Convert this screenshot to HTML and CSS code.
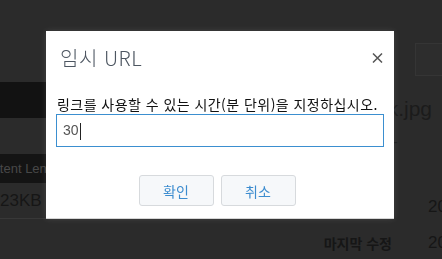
FILE: index.html
```html
<!DOCTYPE html>
<html lang="ko">
<head>
    <meta charset="UTF-8">
    <meta name="viewport" content="width=device-width, initial-scale=1.0">
    <title>임시 URL</title>
    <link rel="stylesheet" href="styles.css">
</head>
<body>
    <div class="page">
        <aside class="side">
            <div class="side-bar"></div>
            <div class="side-head">Content Length</div>
            <div class="side-cell">23KB</div>
        </aside>
        <main class="detail">
            <div class="search"></div>
            <h2 class="file-name">desk.jpg</h2>
            <div class="file-sub">-</div>
            <div class="meta">
                <div class="meta-label">생성</div>
                <div class="meta-value">2019-05-21</div>
                <div class="meta-label">마지막 수정</div>
                <div class="meta-value">2019-05-21</div>
            </div>
        </main>
    </div>

    <div class="modal">
        <div class="modal-header">
            <h3 class="modal-title">임시 URL</h3>
            <button class="close" type="button">
                <svg width="11" height="10" viewBox="0 0 11 10"><path d="M1 0.5L10 9.5M10 0.5L1 9.5" stroke="#555" stroke-width="1.5" fill="none"/></svg>
            </button>
        </div>
        <div class="modal-body">
            <label for="minutes">링크를 사용할 수 있는 시간(분 단위)을 지정하십시오.</label>
            <div class="field" id="minutes">30<span class="caret"></span></div>
        </div>
        <div class="modal-footer">
            <button class="btn" type="button">확인</button>
            <button class="btn" type="button">취소</button>
        </div>
    </div>
</body>
</html>
```

FILE: styles.css
```css
body {
    margin: 0;
    height: 259px;
    overflow: hidden;
    background: #2b2b2b;
    font-family: "Liberation Sans", "Noto Sans CJK KR", sans-serif;
}
.page {
    display: flex;
    margin-left: -26px;
}
.side {
    flex: 0 0 326px;
    padding-top: 82px;
}
.side-bar {
    height: 36px;
    background: #121212;
    margin-bottom: 36px;
}
.side-head {
    height: 29px;
    line-height: 29px;
    padding-left: 2px;
    background: #141414;
    color: #484848;
    font-size: 13px;
    white-space: nowrap;
}
.side-cell {
    height: 35px;
    line-height: 35px;
    padding-left: 26px;
    font-size: 17px;
    color: #161616;
    border-bottom: 1px solid #383838;
}
.detail {
    flex: 0 0 auto;
    padding-top: 43px;
}
.search {
    margin-left: 115px;
    width: 60px;
    height: 31px;
    border: 1px solid #353535;
    background: #2d2d2d;
}
.file-name {
    width: 132px;
    margin: 21px 0 0;
    text-align: right;
    font-size: 21px;
    font-weight: normal;
    line-height: 24px;
    color: #1b1b1b;
}
.file-sub {
    margin: 12px 0 0 93px;
    font-size: 14px;
    line-height: 18px;
    color: #1b1b1b;
}
.meta {
    display: grid;
    grid-template-columns: 92px auto;
    column-gap: 36px;
    margin-top: 38px;
    grid-auto-rows: 36px;
    align-items: center;
    white-space: nowrap;
}
.meta-label {
    text-align: right;
    font-size: 14px;
    font-weight: bold;
    color: #161616;
    font-family: "Noto Sans CJK KR", sans-serif;
}
.meta-value {
    font-size: 17px;
    color: #161616;
}

/* dialog */
.modal {
    position: fixed;
    left: 46px;
    top: 31px;
    width: 348px;
    background: #fff;
    border-bottom: 1px solid #d6d6d6;
    box-shadow: 0 0 6px rgba(255,255,255,0.12);
}
.modal-header {
    display: flex;
    align-items: center;
    justify-content: space-between;
    height: 52px;
    padding: 0 11px 0 14px;
}
.modal-title {
    margin: 0;
    font-family: "Noto Sans CJK KR", sans-serif;
    font-size: 20px;
    font-weight: 300;
    letter-spacing: 0.5px;
    color: #4d5661;
}
.close {
    border: none;
    background: none;
    padding: 0;
    display: flex;
    margin-top: 2px;
}
.modal-body {
    padding: 12px 10px 0;
}
.modal-body label {
    display: block;
    padding-left: 1px;
    font-family: "Noto Sans CJK KR", sans-serif;
    font-size: 14px;
    letter-spacing: 0.45px;
    line-height: 19px;
    color: #111;
}
.field {
    height: 31px;
    line-height: 31px;
    border: 1px solid #3b8fd0;
    padding-left: 6px;
    font-size: 14px;
    color: #555;
}
.caret {
    display: inline-block;
    width: 1px;
    height: 17px;
    background: #222;
    vertical-align: middle;
    margin-left: 1px;
}
.modal-footer {
    display: flex;
    justify-content: center;
    gap: 7px;
    padding: 28px 6px 12px 0;
}
.btn {
    width: 75px;
    height: 31px;
    background: #f6f8fa;
    border: 1px solid #d7dadd;
    border-radius: 3px;
    font-family: "Noto Sans CJK KR", sans-serif;
    font-size: 14px;
    color: #3c8ccf;
}
```
